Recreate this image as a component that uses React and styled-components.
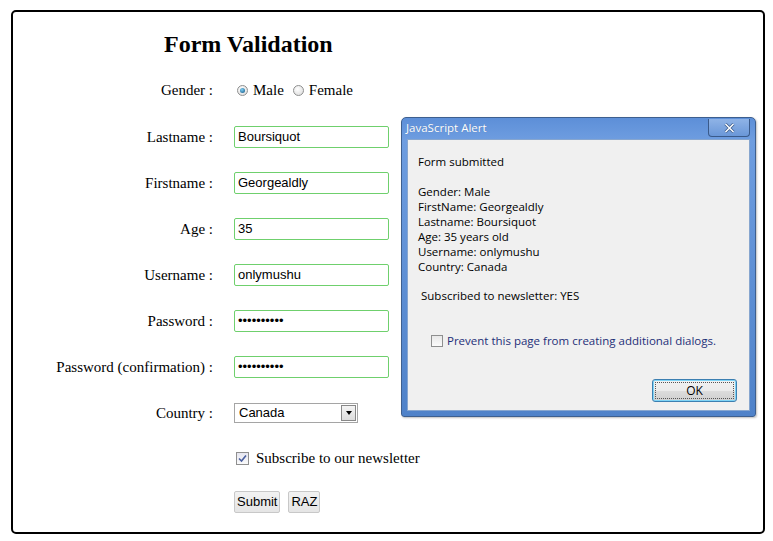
import React from 'react';
import styled, { createGlobalStyle } from 'styled-components';

const GlobalStyle = createGlobalStyle`
  html, body {
    margin: 0;
    padding: 0;
    background: #ffffff;
  }
  body {
    font-family: 'Liberation Serif', 'Times New Roman', serif;
    color: #000;
  }
`;

const Page = styled.div`
  position: relative;
  width: 773px;
  height: 541px;
  overflow: hidden;
  padding: 10px 0 0 11px;
  box-sizing: border-box;
`;

const Frame = styled.div`
  box-sizing: border-box;
  width: 754px;
  height: 524px;
  border: 2px solid #000;
  border-radius: 5px;
`;

const Title = styled.h1`
  margin: 0 0 0 151px;
  padding-top: 19px;
  height: 36px;
  font-family: 'Liberation Serif', 'Times New Roman', serif;
  font-size: 24px;
  font-weight: bold;
  line-height: 26px;
`;

const FormGrid = styled.form`
  display: grid;
  grid-template-columns: 200px 1fr;
  grid-template-rows: 47px repeat(7, 46px) 44px 43px;
  column-gap: 21px;
  align-items: center;
  font-size: 15px;
`;

const Label = styled.label`
  text-align: right;
  white-space: nowrap;
`;

const Field = styled.div`
  display: flex;
  align-items: center;
  gap: ${(p) => p.$gap || 4}px;
`;

const RadioDot = styled.span`
  width: 11px;
  height: 11px;
  border-radius: 50%;
  box-sizing: border-box;
  border: 1px solid #8e8f8f;
  background: radial-gradient(circle at 40% 35%, #ffffff, #d8d8d8);
  display: inline-flex;
  align-items: center;
  justify-content: center;
  margin-left: ${(p) => p.$ml || 0}px;
  &::after {
    content: '';
    display: ${(p) => (p.$checked ? 'block' : 'none')};
    width: 5px;
    height: 5px;
    border-radius: 50%;
    background: radial-gradient(circle at 40% 35%, #7fd0f5, #0b4f7e);
  }
`;

const TextBox = styled.div`
  box-sizing: border-box;
  width: 155px;
  height: 22px;
  border: 1px solid #6fd06d;
  border-radius: 2px;
  padding: 0 3px;
  font-family: 'Liberation Sans', Arial, sans-serif;
  font-size: 13px;
  line-height: 20px;
  color: #000;
`;

const Dots = styled.span`
  font-size: 13px;
  letter-spacing: 0;
`;

const Select = styled.div`
  box-sizing: border-box;
  width: 124px;
  height: 20px;
  border: 1px solid #a5a5a5;
  display: flex;
  align-items: stretch;
  font-family: 'Liberation Sans', Arial, sans-serif;
  font-size: 13px;
`;

const SelectValue = styled.span`
  flex: 1;
  padding-left: 4px;
  line-height: 18px;
`;

const SelectArrow = styled.span`
  width: 15px;
  margin: 1px;
  box-sizing: border-box;
  border: 1px solid #888;
  background: linear-gradient(#f4f4f4, #dcdcdc);
  display: flex;
  align-items: center;
  justify-content: center;
  &::after {
    content: '';
    border-left: 3.5px solid transparent;
    border-right: 3.5px solid transparent;
    border-top: 4px solid #000;
  }
`;

const CheckBox = styled.span`
  width: 13px;
  height: 13px;
  box-sizing: border-box;
  border: 1px solid #8f8f8f;
  background: linear-gradient(#e6e6f0, #fafafa);
  display: inline-flex;
  align-items: center;
  justify-content: center;
  margin: 0 3px 0 2px;
`;

const Button = styled.span`
  box-sizing: border-box;
  height: 22px;
  padding: 0 2px;
  border: 1px solid #c8c8c8;
  border-radius: 2px;
  background: linear-gradient(#f2f2f2, #e5e5e5);
  font-family: 'Liberation Sans', Arial, sans-serif;
  font-size: 13px;
  line-height: 20px;
  margin-right: 4px;
`;

const Dialog = styled.div`
  position: absolute;
  left: 401px;
  top: 117px;
  width: 355px;
  height: 300px;
  box-sizing: border-box;
  border: 1px solid #3d5f8f;
  border-radius: 5px 5px 3px 3px;
  background: linear-gradient(#5d8fd8 0px, #6e9de0 22px, #4f82c9 100%);
  box-shadow: 1px 1px 2px rgba(0, 0, 0, 0.25);
  display: flex;
  flex-direction: column;
  padding: 0 5px 5px 5px;
  font-family: 'Open Sans', 'Noto Sans', sans-serif;
  font-size: 11.5px;
  color: #000;
`;

const TitleBar = styled.div`
  height: 21px;
  display: flex;
  align-items: flex-start;
  justify-content: space-between;
  color: #fff;
  font-size: 11.5px;
  line-height: 20px;
  margin-left: -1px;
  text-shadow: 0 0 1px rgba(0, 0, 0, 0.2);
`;

const CloseBtn = styled.span`
  width: 42px;
  height: 18px;
  margin-top: 1px;
  box-sizing: border-box;
  border: 1px solid #3a5a8a;
  border-top: none;
  border-radius: 0 0 4px 4px;
  background: linear-gradient(#8fb3e6, #6a97d8);
  display: flex;
  align-items: center;
  justify-content: center;
`;

const DialogBody = styled.div`
  flex: 1;
  background: #f0f0f0;
  border: 1px solid #87a6cf;
  display: flex;
  flex-direction: column;
  padding: 14px 10px 8px 10px;
`;

const MsgLine = styled.div`
  line-height: 15px;
  margin-top: ${(p) => p.$mt || 0}px;
  padding-left: ${(p) => p.$pl || 0}px;
`;

const PreventRow = styled.div`
  display: flex;
  align-items: center;
  gap: 4px;
  margin: 30px 0 0 13px;
  color: #1e2f78;
`;

const SmallBox = styled.span`
  width: 12px;
  height: 12px;
  box-sizing: border-box;
  border: 1px solid #8e8f8f;
  background: linear-gradient(#e8e8e8, #fbfbfb);
`;

const Footer = styled.div`
  margin-top: auto;
  display: flex;
  justify-content: flex-end;
  padding-right: 2px;
`;

const OkButton = styled.span`
  width: 85px;
  height: 23px;
  box-sizing: border-box;
  border: 1px solid #3c7fb1;
  border-radius: 3px;
  background: linear-gradient(#f2f2f2 0%, #ebebeb 50%, #dddddd 51%, #cfcfcf 100%);
  box-shadow: inset 0 0 0 1px #7fd4f6;
  display: flex;
  align-items: center;
  justify-content: center;
  position: relative;
  font-size: 12px;
  &::after {
    content: '';
    position: absolute;
    inset: 2px;
    border: 1px dotted #555;
  }
`;

function App() {
  const fields = [
    { label: 'Lastname :', value: 'Boursiquot' },
    { label: 'Firstname :', value: 'Georgealdly' },
    { label: 'Age :', value: '35' },
    { label: 'Username :', value: 'onlymushu' },
  ];

  return (
    <Page>
      <GlobalStyle />
      <Frame>
        <Title>Form Validation</Title>
        <FormGrid>
          <Label>Gender :</Label>
          <Field $gap={5}>
            <RadioDot $checked $ml={3} />
            <span>Male</span>
            <RadioDot $ml={4} />
            <span>Female</span>
          </Field>

          {fields.map((f) => (
            <React.Fragment key={f.label}>
              <Label>{f.label}</Label>
              <Field>
                <TextBox>{f.value}</TextBox>
              </Field>
            </React.Fragment>
          ))}

          <Label>Password :</Label>
          <Field>
            <TextBox>
              <Dots>••••••••••</Dots>
            </TextBox>
          </Field>

          <Label>Password (confirmation) :</Label>
          <Field>
            <TextBox>
              <Dots>••••••••••</Dots>
            </TextBox>
          </Field>

          <Label>Country :</Label>
          <Field>
            <Select>
              <SelectValue>Canada</SelectValue>
              <SelectArrow />
            </Select>
          </Field>

          <span />
          <Field>
            <CheckBox>
              <svg width="9" height="9" viewBox="0 0 9 9">
                <path d="M1 4.5 L3.5 7 L8 1.5" stroke="#4a5f9f" strokeWidth="1.6" fill="none" />
              </svg>
            </CheckBox>
            <span>Subscribe to our newsletter</span>
          </Field>

          <span />
          <Field>
            <Button>Submit</Button>
            <Button>RAZ</Button>
          </Field>
        </FormGrid>
      </Frame>

      <Dialog>
        <TitleBar>
          <span>JavaScript Alert</span>
          <CloseBtn>
            <svg width="11" height="10" viewBox="0 0 11 10">
              <path d="M1.5 1 L9.5 9 M9.5 1 L1.5 9" stroke="#3a5a8a" strokeWidth="3" />
              <path d="M1.5 1 L9.5 9 M9.5 1 L1.5 9" stroke="#ffffff" strokeWidth="1.5" />
            </svg>
          </CloseBtn>
        </TitleBar>
        <DialogBody>
          <MsgLine>Form submitted</MsgLine>
          <MsgLine $mt={15}>Gender: Male</MsgLine>
          <MsgLine>FirstName: Georgealdly</MsgLine>
          <MsgLine>Lastname: Boursiquot</MsgLine>
          <MsgLine>Age: 35 years old</MsgLine>
          <MsgLine>Username: onlymushu</MsgLine>
          <MsgLine>Country: Canada</MsgLine>
          <MsgLine $mt={14} $pl={3}>Subscribed to newsletter: YES</MsgLine>
          <PreventRow>
            <SmallBox />
            <span>Prevent this page from creating additional dialogs.</span>
          </PreventRow>
          <Footer>
            <OkButton>OK</OkButton>
          </Footer>
        </DialogBody>
      </Dialog>
    </Page>
  );
}

export default App;
